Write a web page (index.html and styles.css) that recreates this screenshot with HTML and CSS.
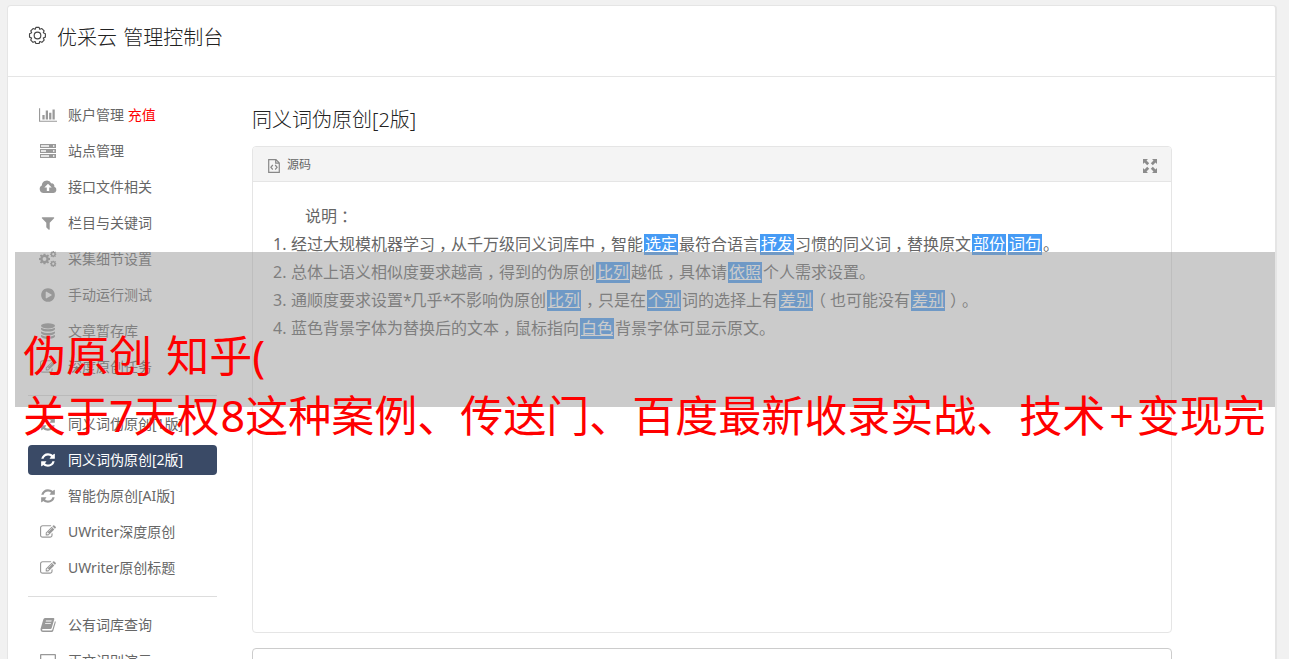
FILE: index.html
```html
<!DOCTYPE html>
<html lang="zh-CN">
<head>
    <meta charset="UTF-8">
    <meta name="viewport" content="width=device-width, initial-scale=1.0">
    <title>优采云 管理控制台</title>
    <link rel="stylesheet" href="styles.css">
</head>
<body>
    <!-- shared icons -->
    <svg class="sprite" width="0" height="0">
        <symbol id="i-refresh" viewBox="0 0 1792 1792"><path d="M1639 1056q0 5-1 7-64 268-268 434.500t-478 166.500q-146 0-282.500-55t-243.500-157l-129 129q-19 19-45 19t-45-19-19-45v-448q0-26 19-45t45-19h448q26 0 45 19t19 45-19 45l-137 137q71 66 161 102t187 36q134 0 250-65t186-179q11-17 53-117 8-23 30-23h192q13 0 22.500 9.500t9.500 22.500zm25-800v448q0 26-19 45t-45 19h-448q-26 0-45-19t-19-45 19-45l138-138q-148-137-349-137-134 0-250 65t-186 179q-11 17-53 117-8 23-30 23h-199q-13 0-22.500-9.500t-9.500-22.500v-7q65-268 270-434.500t480-166.500q146 0 284 55.500t245 156.500l130-129q19-19 45-19t45 19 19 45z"/></symbol>
        <symbol id="i-edit" viewBox="0 0 1792 1792"><path d="M888 1184l116-116-152-152-116 116v56h96v96h56zm440-720q-16-16-33 1l-350 350q-17 17-1 33t33-1l350-350q17-17 1-33zm80 594v190q0 119-84.500 203.500t-203.500 84.500h-832q-119 0-203.500-84.500t-84.500-203.500v-832q0-119 84.500-203.500t203.500-84.500h832q63 0 117 25 15 7 18 23 3 17-9 29l-49 49q-14 14-32 8-23-6-45-6h-832q-66 0-113 47t-47 113v832q0 66 47 113t113 47h832q66 0 113-47t47-113v-126q0-13 9-22l64-64q15-15 35-7t20 29zm-96-738l288 288-672 672h-288v-288zm444 132l-92 92-288-288 92-92q28-28 68-28t68 28l152 152q28 28 28 68t-28 68z"/></symbol>
        <symbol id="i-cog" viewBox="0 0 12 12"><path fill-rule="evenodd" d="M5 0h2l.3 1.600 1 .4L9.700 1 11 2.300 10 3.700l.4 1L12 5v2l-1.600.3-.4 1 1 1.400L9.700 11l-1.400-1-1 .4L7 12H5l-.3-1.600-1-.4-1.400 1L1 9.700l1-1.400-.4-1L0 7V5l1.600-.3.4-1L1 2.300 2.300 1l1.400 1 1-.4zM6 3.900a2.100 2.100 0 1 0 0 4.200 2.100 2.100 0 0 0 0-4.200z"/></symbol>
    </svg>

    <div class="panel">
        <header class="header">
            <svg class="gear" viewBox="0 0 20 20"><path d="M8.300 1.500h3.400l.7 2 2.200-.8 2.400 2.400-.9 2.100 2.200.9v3.600l-2.200.9.9 2.200-2.400 2.400-2.200-.9-.7 2.100H8.300l-.8-2.100-2.200.9-2.400-2.400.9-2.200-2.200-.9V8.100l2.200-.9-.9-2.100 2.400-2.400 2.200.8z"/><circle cx="10" cy="10" r="3.500"/></svg>
            <h1>优采云 管理控制台</h1>
        </header>

        <div class="content">
            <ul class="nav">
                <li><svg class="icon icon-wide" viewBox="0 0 2048 1792"><path d="M640 896v512h-256v-512h256zm384-512v1024h-256v-1024h256zm1024 1152v128h-2048v-1536h128v1408h1920zm-640-896v768h-256v-768h256zm384-384v1152h-256v-1152h256z"/></svg>账户管理 <span class="recharge">充值</span></li>
                <li><svg class="icon icon-wide" viewBox="0 0 18 16"><path fill-rule="evenodd" d="M1 1h16v4H1zM2 2.300v1.400h8V2.300zM1 6h16v4H1zM2 7.300v1.400h5V7.300zM1 11h16v4H1zM2 12.300v1.400h8v-1.400zM14 2.300v1.400h1.400V2.300zM14 7.300v1.400h1.400V7.300zM14 12.300v1.400h1.400v-1.400z"/></svg>站点管理</li>
                <li><svg class="icon icon-wide" viewBox="0 0 18 16"><path fill-rule="evenodd" d="M4.500 14A4 4 0 0 1 2.800 6.500 5 5 0 0 1 12.300 4.400a2.700 2.700 0 0 1 3 3.400A3.200 3.200 0 0 1 14.500 14zM9 4.800L5.300 8.600h2.500V12h2.400V8.600h2.500z"/></svg>接口文件相关</li>
                <li><svg class="icon" viewBox="0 0 1792 1792"><path d="M1595 295q17 41-14 70l-493 493v742q0 42-39 59-13 5-25 5-27 0-45-19l-256-256q-19-19-19-45v-486l-493-493q-31-29-14-70 17-39 59-39h1280q42 0 59 39z"/></svg>栏目与关键词</li>
                <li><svg class="icon icon-wide" viewBox="0 0 18 16"><use href="#i-cog" x="0" y="2.500" width="11" height="11"/><use href="#i-cog" x="11" y="0" width="6.500" height="6.500"/><use href="#i-cog" x="11" y="9.500" width="6.500" height="6.500"/></svg>采集细节设置</li>
                <li><svg class="icon" viewBox="0 0 1792 1792"><path d="M896 128q209 0 385.500 103t279.500 279.500 103 385.500-103 385.500-279.500 279.500-385.500 103-385.500-103-279.500-279.500-103-385.500 103-385.500 279.500-279.500 385.500-103zm384 823q32-18 32-55t-32-55l-544-320q-31-19-64-1-32 19-32 56v640q0 37 32 56 16 8 32 8 17 0 32-9z"/></svg>手动运行测试</li>
                <li><svg class="icon" viewBox="0 0 16 16"><ellipse cx="8" cy="2.800" rx="7" ry="2.600"/><path d="M1 4.700q7 3.200 14 0v1.600q-1 2.300-7 2.300T1 6.300zM1 8.400q7 3.200 14 0V10q-1 2.300-7 2.300T1 10zM1 12.100q7 3.200 14 0v1.500q-1 2.300-7 2.300t-7-2.300z"/></svg>文章暂存库</li>
                <li><svg class="icon"><use href="#i-edit"/></svg>深度原创任务</li>
                <li class="divider"></li>
                <li><svg class="icon"><use href="#i-refresh"/></svg>同义词伪原创[1版]</li>
                <li class="active"><svg class="icon"><use href="#i-refresh"/></svg>同义词伪原创[2版]</li>
                <li><svg class="icon"><use href="#i-refresh"/></svg>智能伪原创[AI版]</li>
                <li><svg class="icon"><use href="#i-edit"/></svg>UWriter深度原创</li>
                <li><svg class="icon"><use href="#i-edit"/></svg>UWriter原创标题</li>
                <li class="divider"></li>
                <li><svg class="icon" viewBox="0 0 16 16"><path fill-rule="evenodd" d="M5 1h8.600q1 .2.700 1.300L11.700 11q-.3 1-1.300 1H3q-1 0-1 .8t1 .7h8.300q.8 0 1.100-.9L15 4q1 .5.700 1.500L13.200 14q-.4 1-1.500 1H3q-2.500-.2-2.500-3L3.300 2.500Q3.700 1 5 1zM6 3.500l-.3.9h5.700l.3-.9zM5.300 5.900l-.3.900h5.700l.3-.9z"/></svg>公有词库查询</li>
                <li><svg class="icon icon-wide" viewBox="0 0 18 16"><path fill-rule="evenodd" d="M2 1h14q1 0 1 1v9q0 1-1 1h-4l1 3H5l1-3H2q-1 0-1-1V2q0-1 1-1zm.3 1.300v8.400h13.400V2.300z"/></svg>正文识别演示</li>
            </ul>

            <div class="main">
                <h2>同义词伪原创[2版]</h2>
                <div class="editor">
                    <div class="toolbar">
                        <svg class="source-icon" viewBox="0 0 12 14"><path d="M.7.700H8l3.300 3.200v9.400H.7zM7.700 1v3.200H11"/><path d="M4.800 6L2.900 8.300l1.900 2.200M7.200 6l1.900 2.300-1.900 2.200"/></svg>
                        <span>源码</span>
                        <svg class="expand-icon" viewBox="0 0 14 14"><path d="M0 0h5L3.500 1.500l2.700 2.700-2 2-2.700-2.700L0 5zM14 0v5l-1.500-1.500-2.700 2.700-2-2 2.700-2.700L9 0zM0 14V9l1.500 1.500 2.700-2.700 2 2-2.700 2.700L5 14zM14 14H9l1.500-1.500-2.700-2.700 2-2 2.700 2.700L14 9z"/></svg>
                    </div>
                    <div class="text">
                        <p class="intro">说明<i class="mid">：</i></p>
                        <p><span class="num">1.</span>经过大规模机器学习<i class="mid">，</i>从千万级同义词库中<i class="mid">，</i>智能<span class="word">选定</span>最符合语言<span class="word">抒发</span>习惯的同义词<i class="mid">，</i>替换原文<span class="word">部份</span><span class="word">词句</span>。</p>
                        <p><span class="num">2.</span>总体上语义相似度要求越高<i class="mid">，</i>得到的伪原创<span class="word">比列</span>越低<i class="mid">，</i>具体请<span class="word">依照</span>个人需求设置。</p>
                        <p><span class="num">3.</span>通顺度要求设置<i class="star">*</i>几乎<i class="star">*</i>不影响伪原创<span class="word">比列</span><i class="mid">，</i>只是在<span class="word">个别</span>词的选择上有<span class="word">差别</span><i class="open">（</i>也可能没有<span class="word">差别</span><i class="mid">）</i><i>。</i></p>
                        <p><span class="num">4.</span>蓝色背景字体为替换后的文本<i class="mid">，</i>鼠标指向<span class="word">白色</span>背景字体可显示原文。</p>
                    </div>
                </div>
                <div class="next-box"></div>
            </div>
        </div>
    </div>

    <div class="overlay">
        <div class="line-1">伪原创 知乎(</div>
        <div>关于7天权<span class="eight">8</span>这种案例、传送门、百度最新收录实战、技术<span class="plus">+</span>变现完</div>
    </div>
</body>
</html>
```

FILE: styles.css
```css
* {
    box-sizing: border-box;
}

body {
    margin: 0;
    padding: 5px 12px 0 7px;
    height: 659px;
    overflow: hidden;
    position: relative;
    background-color: #f1f1f1;
    font-family: "Noto Sans", "Noto Sans CJK SC", sans-serif;
    font-size: 14px;
    color: #666;
}

.sprite {
    position: absolute;
}

.panel {
    height: 654px;
    overflow: hidden;
    background-color: white;
    border: 1px solid #e5e5e5;
    border-right-width: 2px;
    border-bottom: none;
    border-radius: 4px 4px 0 0;
}

.header {
    display: flex;
    align-items: flex-start;
    height: 71px;
    padding: 20px 20px 0;
    border-bottom: 1px solid #e5e5e5;
}

.gear {
    width: 19px;
    height: 19px;
    margin-right: 10px;
    fill: none;
    stroke: #444;
    stroke-width: 1.2;
    stroke-linejoin: round;
}

h1, h2 {
    margin: 0;
    font-size: 20px;
    font-weight: 300;
    line-height: 22px;
    color: #222;
}

h1 {
    padding-top: 1px;
    word-spacing: 1px;
}

.content {
    display: flex;
    padding: 23px 20px 0;
}

.nav {
    width: 189px;
    margin: 0 35px 0 0;
    padding: 0;
    list-style: none;
}

.nav li {
    display: flex;
    align-items: center;
    height: 30px;
    margin-bottom: 6px;
    padding-left: 12px;
    border-radius: 4px;
    line-height: 30px;
    white-space: pre;
}

.nav .divider {
    height: 1px;
    margin: 13px 0;
    border-radius: 0;
    background-color: #ddd;
}

.nav .active {
    background-color: #3a4a66;
    color: white;
}

.icon {
    width: 16px;
    height: 16px;
    margin-right: 12px;
    fill: #999;
}

.icon-wide {
    width: 18px;
    margin: 0 11px 0 -1px;
}

.active .icon {
    fill: white;
}

.recharge {
    color: red;
}

.main {
    width: 920px;
}

h2 {
    margin: 9px 0 15px;
}

.editor {
    height: 487px;
    border: 1px solid #e5e5e5;
    border-radius: 4px;
}

.toolbar {
    display: flex;
    align-items: center;
    height: 35px;
    padding: 0 14px 0 15px;
    border-bottom: 1px solid #e5e5e5;
    border-radius: 3px 3px 0 0;
    background-color: #f4f4f4;
    font-size: 12px;
}

.source-icon {
    width: 12px;
    height: 14px;
    margin: 3px 7px 0 0;
    fill: none;
    stroke: #888;
    stroke-width: 1.2;
}

.expand-icon {
    width: 14px;
    height: 14px;
    margin: 3px 0 0 auto;
    fill: #8c8c8c;
}

.text {
    padding: 20px;
    font-size: 16px;
    line-height: 28px;
    white-space: nowrap;
}

.text p {
    display: flex;
    align-items: center;
    height: 28px;
    margin: 0;
}

.text i {
    font-style: normal;
}

.text .intro {
    padding-left: 32px;
}

.num {
    width: 18px;
}

.star {
    width: 7.5px;
}

/* punctuation sits in the middle of its cell */
.mid {
    width: 16px;
    padding-left: 4px;
}

.open {
    width: 16px;
    text-indent: -4px;
}

.word {
    width: 34px;
    height: 21px;
    margin: 0 1px;
    background-color: #469bf5;
    color: white;
    line-height: 20px;
    text-align: center;
    text-decoration: underline;
}

.next-box {
    height: 40px;
    margin-top: 15px;
    border: 1px solid #ccc;
    border-radius: 4px;
}

/* caption strip over the page */
.overlay {
    position: absolute;
    left: 15px;
    top: 252px;
    width: 1260px;
    height: 155px;
    padding: 74px 0 0 8px;
    background-color: rgba(151, 151, 151, 0.5);
    color: red;
    font-size: 43px;
    line-height: 60px;
    white-space: nowrap;
}

.line-1 {
    word-spacing: 3px;
}

.eight {
    padding-left: 1px;
}

.plus {
    padding: 0 3px 0 4px;
}
```
